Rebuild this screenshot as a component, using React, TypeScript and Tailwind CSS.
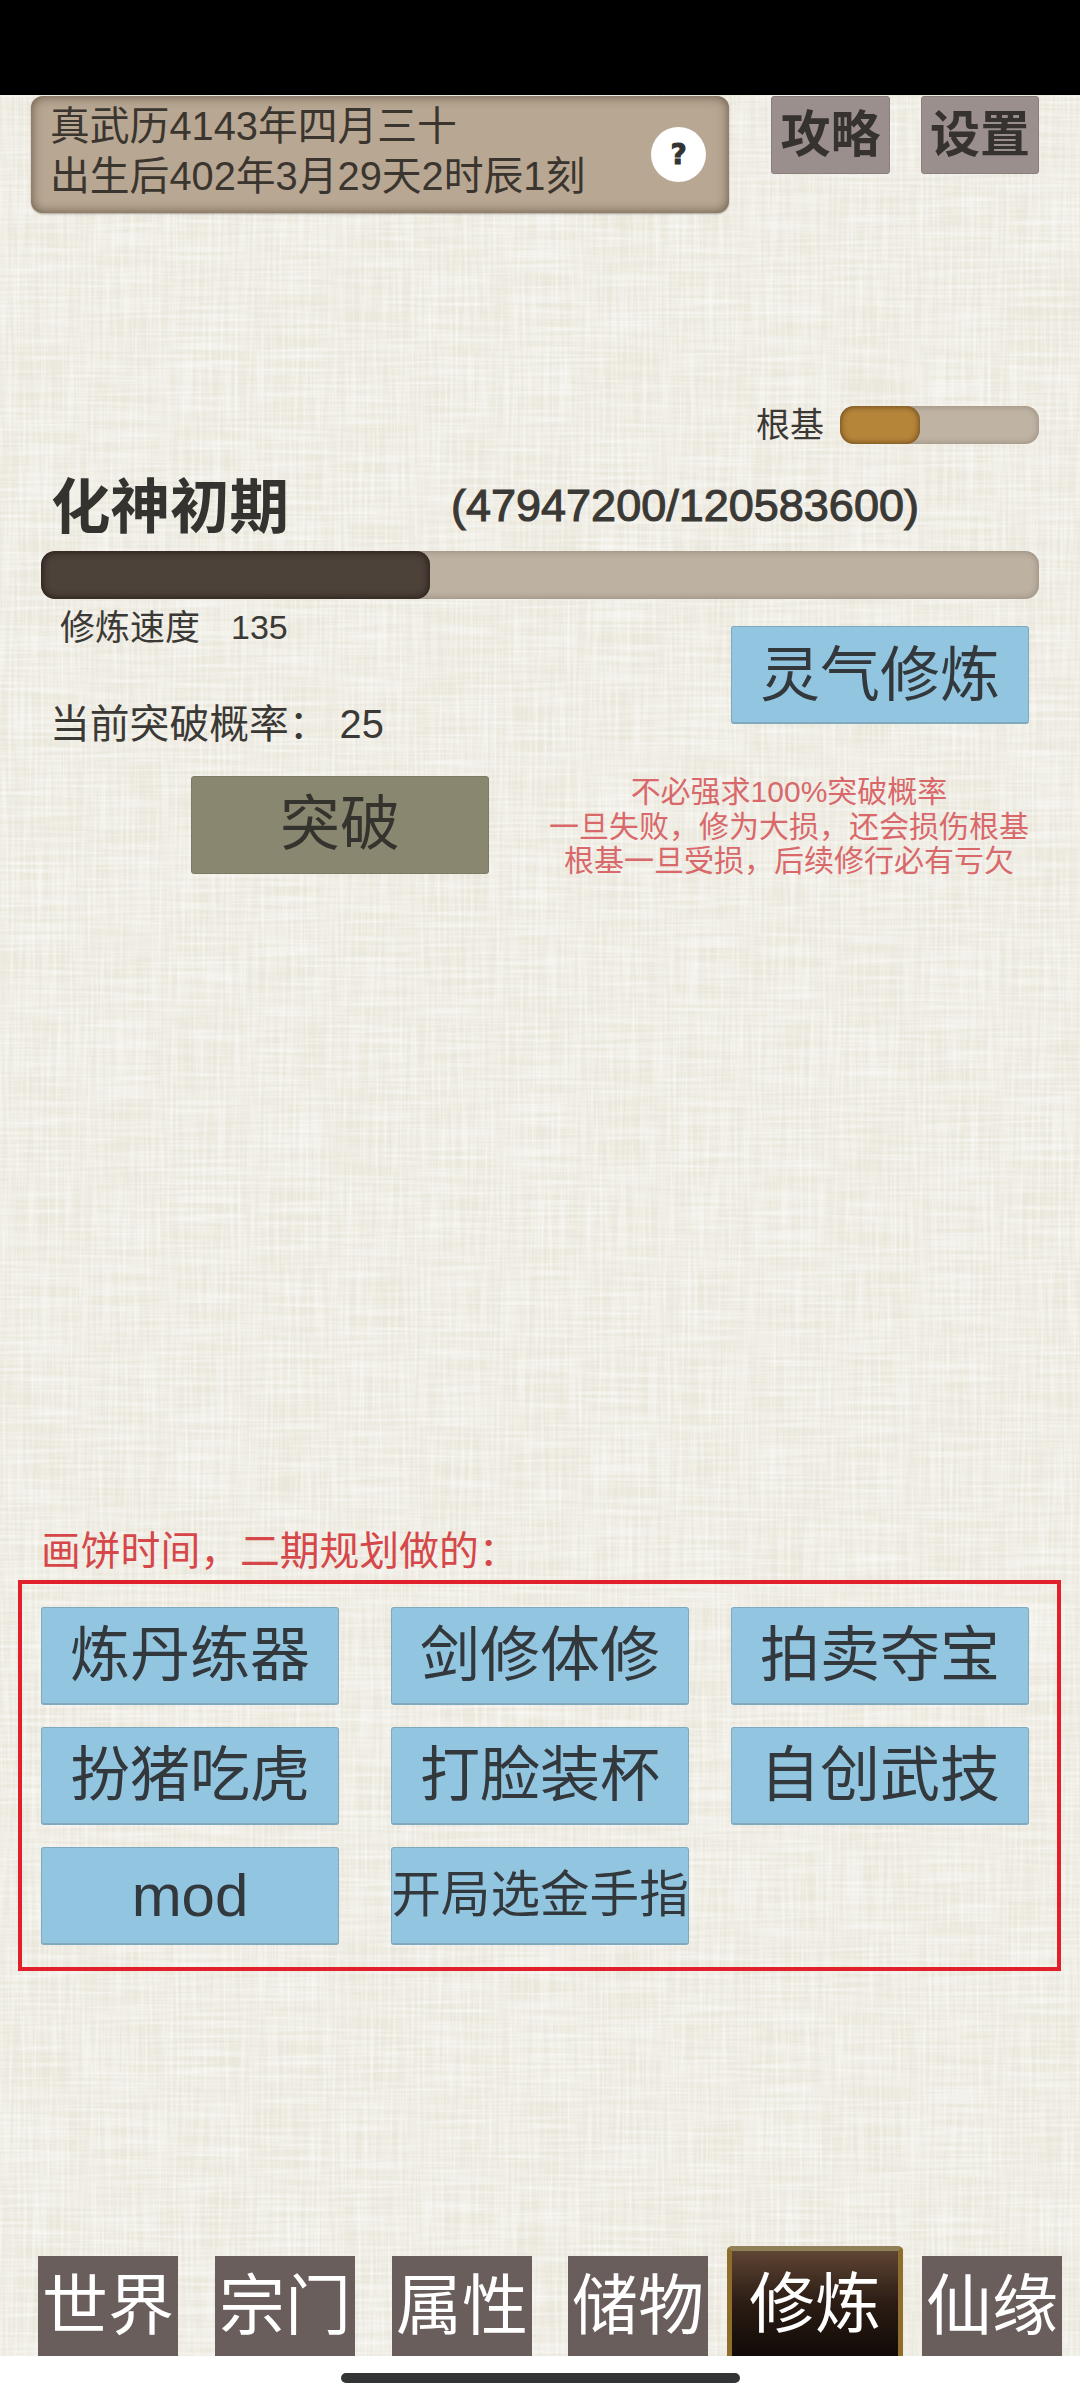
import React from 'react';

const planned = ['炼丹练器', '剑修体修', '拍卖夺宝', '扮猪吃虎', '打脸装杯', '自创武技', 'mod'];
const tabs = ['世界', '宗门', '属性', '储物', '修炼', '仙缘'];

const BlueButton: React.FC<{ label: string; small?: boolean }> = ({ label, small }) => (
  <button
    className={`w-[298px] h-[98px] pt-[2px] rounded-[3px] bg-[#92c5e0] border border-[#7fa9bf] border-b-2 leading-none text-[#33383c] whitespace-nowrap flex items-center justify-center ${
      small ? 'text-[49.6px]' : 'text-[60px]'
    }`}
  >
    {label}
  </button>
);

// 亚麻布纹理
const LinenTexture: React.FC = () => (
  <svg className="absolute inset-0 w-full h-full pointer-events-none" aria-hidden="true">
    <filter id="linen-h" x="0" y="0" width="100%" height="100%">
      <feTurbulence type="fractalNoise" baseFrequency="0.012 0.3" numOctaves="2" seed="4" />
      <feColorMatrix values="0 0 0 0 1  0 0 0 0 1  0 0 0 0 1  1 0 0 0 -0.34" />
    </filter>
    <filter id="linen-v" x="0" y="0" width="100%" height="100%">
      <feTurbulence type="fractalNoise" baseFrequency="0.34 0.012" numOctaves="2" seed="9" />
      <feColorMatrix values="0 0 0 0 1  0 0 0 0 1  0 0 0 0 1  1 0 0 0 -0.34" />
    </filter>
    <rect width="100%" height="100%" filter="url(#linen-h)" />
    <rect width="100%" height="100%" filter="url(#linen-v)" />
  </svg>
);

const App: React.FC = () => {
  return (
    <div className="w-[1080px] h-[2400px] flex flex-col overflow-hidden bg-white text-[#3b3935] font-['Liberation_Sans','Noto_Sans_CJK_SC',sans-serif]">
      <div className="h-[95px] bg-black shrink-0" />

      <div className="relative flex-1 bg-[#e9e6da]">
        <LinenTexture />
        <div className="relative h-full flex flex-col">
          {/* 顶部日期和按钮 */}
          <div className="flex pt-px pl-[31px]">
            <div className="w-[698px] h-[117px] rounded-[12px] bg-[#b8a792] shadow-[inset_0_0_12px_rgba(60,45,30,0.7),0_1px_2px_rgba(60,45,30,0.4)] flex justify-between pl-[19px] pr-[23px]">
              <div className="pt-[5px] text-[39.8px] leading-[50px] text-[#3a352f] whitespace-nowrap">
                <div>真武历4143年四月三十</div>
                <div>出生后402年3月29天2时辰1刻</div>
              </div>
              <div className="mt-[31px] w-[55px] h-[55px] rounded-full bg-white flex items-center justify-center text-[28px] leading-none font-bold text-[#333] font-['DejaVu_Sans',sans-serif] [-webkit-text-stroke:1px_#333]">
                ?
              </div>
            </div>
            <button className="ml-[42px] w-[119px] h-[78px] rounded-[3px] bg-[#9b8f8d] border border-[#8a7f7d] text-[50px] leading-none font-bold text-[#353230] flex items-center justify-center whitespace-nowrap">
              攻略
            </button>
            <button className="ml-[31px] w-[118px] h-[78px] rounded-[3px] bg-[#9b8f8d] border border-[#8a7f7d] text-[50px] leading-none font-bold text-[#353230] flex items-center justify-center whitespace-nowrap">
              设置
            </button>
          </div>

          {/* 根基 */}
          <div className="mt-[193px] flex justify-end items-center gap-[16px] pr-[41px]">
            <span className="text-[34px] leading-none">根基</span>
            <div className="w-[199px] h-[38px] rounded-[14px] bg-[#bfb3a4] shadow-[inset_0_0_6px_rgba(90,75,60,0.45)] overflow-hidden">
              <div className="w-[80px] h-full rounded-[14px] bg-[#b5853a] shadow-[inset_0_0_6px_rgba(70,40,10,0.85)]" />
            </div>
          </div>

          {/* 境界 */}
          <div className="mt-[26px] h-[71px] flex items-center pl-[51px]">
            <span className="w-[400px] pt-[4px] text-[59.5px] leading-none font-bold text-[#353330]">化神初期</span>
            <span className="text-[45px] leading-none [-webkit-text-stroke:1.1px_#3b3935]">(47947200/120583600)</span>
          </div>

          <div className="mt-[10px] ml-[41px] w-[998px] h-[48px] rounded-[14px] bg-[#bdb1a2] shadow-[inset_0_0_7px_rgba(90,75,60,0.45)] overflow-hidden">
            <div className="w-[389px] h-full rounded-[14px] bg-[#4d423a] shadow-[inset_0_0_8px_rgba(20,12,6,0.85)]" />
          </div>

          {/* 修炼信息 */}
          <div className="flex justify-between pr-[51px]">
            <div>
              <div className="mt-[10px] ml-[60px] h-[36px] flex items-center leading-none whitespace-nowrap">
                <span className="text-[35px]">修炼速度</span>
                <span className="ml-[31px] text-[34px]">135</span>
              </div>
              <div className="mt-[58px] ml-[50px] h-[44px] flex items-center text-[39.8px] leading-none whitespace-nowrap">
                <span>当前突破概率：</span>
                <span className="ml-[11px]">25</span>
              </div>
            </div>
            <div className="mt-[27px]">
              <BlueButton label="灵气修炼" />
            </div>
          </div>

          <div className="mt-[29px] flex">
            <button className="ml-[191px] w-[298px] h-[98px] rounded-[3px] bg-[#8a8771] border border-[#7d7a66] text-[60px] leading-none text-[#35332d] flex items-center justify-center">
              突破
            </button>
            <div className="ml-[60px] -mt-[1px] w-[480px] text-center text-[30px] leading-[34.5px] text-[#d9686b] whitespace-nowrap">
              <div>不必强求100%突破概率</div>
              <div>一旦失败，修为大损，还会损伤根基</div>
              <div>根基一旦受损，后续修行必有亏欠</div>
            </div>
          </div>

          {/* 二期规划 */}
          <div className="mt-[650px] pl-[41px] text-[39.8px] leading-[44px] text-[#d6474a] whitespace-nowrap">
            画饼时间，二期规划做的：
          </div>
          <div className="mt-[7px] ml-[18px] w-[1043px] h-[391px] border-4 border-[#e2202c] pt-[23px] pl-[19px]">
            <div className="grid grid-cols-[350px_340px_298px] gap-y-[22px]">
              {planned.map((name) => (
                <BlueButton key={name} label={name} />
              ))}
              <BlueButton label="开局选金手指" small />
            </div>
          </div>

          {/* 底部导航 */}
          <div className="mt-auto h-[110px] flex items-end pl-[38px]">
            {tabs.map((tab, i) =>
              i === 4 ? (
                <button
                  key={tab}
                  className="w-[176px] h-[110px] mr-[19px] rounded-t-[5px] border-x-[5px] border-t-[5px] border-x-[#8f6e2c] border-t-[#8f8058] bg-gradient-to-b from-[#5f4534] via-[#2b1c14] to-[#120b07] text-[66px] leading-none text-white flex items-center justify-center"
                >
                  {tab}
                </button>
              ) : (
                <button
                  key={tab}
                  className={`w-[140px] h-[100px] bg-[#6a5e5c] text-[66px] leading-none text-white flex items-center justify-center whitespace-nowrap ${
                    i === 3 ? 'mr-[19px]' : i === 2 ? 'mr-[36px]' : i < 2 ? 'mr-[37px]' : ''
                  }`}
                >
                  {tab}
                </button>
              )
            )}
          </div>
        </div>
      </div>

      <div className="h-[44px] shrink-0 bg-white flex justify-center pt-[17px]">
        <div className="w-[399px] h-[10px] rounded-full bg-[#333436]" />
      </div>
    </div>
  );
};

export default App;
